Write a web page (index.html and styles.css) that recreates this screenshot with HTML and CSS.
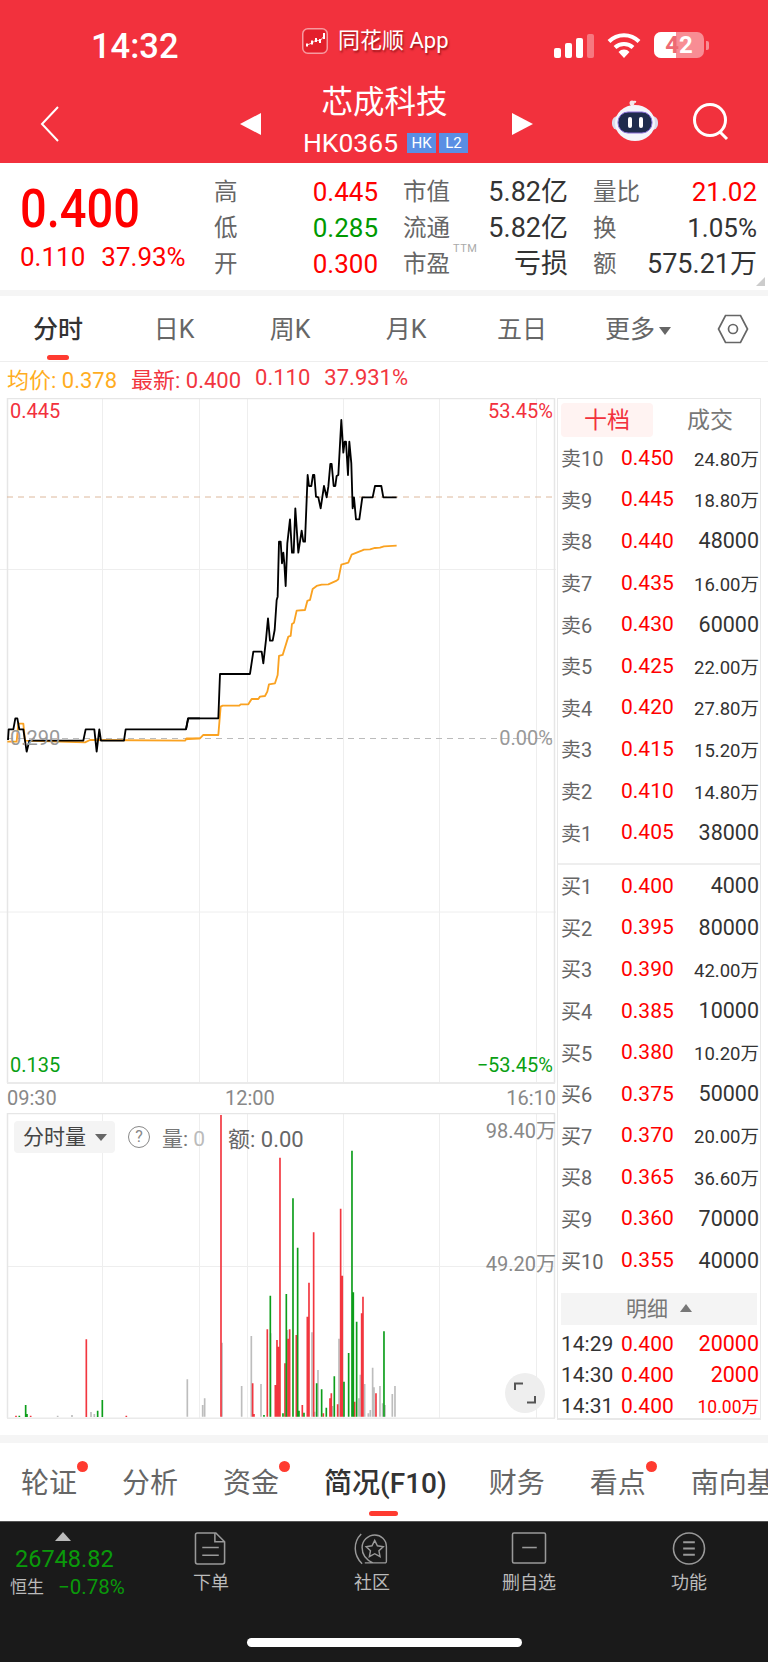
FILE: index.html
```html
<!DOCTYPE html>
<html lang="zh">
<head>
<meta charset="utf-8">
<title>芯成科技</title>
<link rel="stylesheet" href="styles.css">
</head>
<body>
<div class="page">
  <header class="header">
    <div class="status">
      <div class="time">14:32</div>
      <div class="app">
        <svg class="app-logo" viewBox="0 0 26 26"><rect x=".75" y=".75" width="24.5" height="24.5" rx="5" fill="#e3202c" stroke="#f79aa0" stroke-width="1.5"/><path d="M5 17l5-2 4-3 4 1 4-5" fill="none" stroke="#fff" stroke-width=".8"/><path d="M5 15.500v3M10 12.500v4M14 10v4M18 11v4M22 5v6" stroke="#fff" stroke-width="2"/></svg>
        <span class="app-name">同花顺 App</span>
      </div>
      <div class="sys">
        <div class="signal"><i class="b1"></i><i class="b2"></i><i class="b3"></i><i class="b4"></i></div>
        <svg class="wifi" viewBox="0 0 34 26"><path d="M2 9.500a21 21 0 0 1 30 0" fill="none" stroke="#fff" stroke-width="4"/><path d="M8 15.500a13 13 0 0 1 18 0" fill="none" stroke="#fff" stroke-width="4"/><path d="M17 26l-5.500-6a7.500 7.500 0 0 1 11 0z" fill="#fff"/></svg>
        <div class="battery"><div class="battery-fill"></div><span class="battery-num"><span class="bn-a">4</span><span class="bn-b">2</span></span></div>
        <div class="battery-nub"></div>
      </div>
    </div>
    <div class="nav">
      <svg class="back" viewBox="0 0 20 36"><path d="M18 1L2 18l16 17" fill="none" stroke="#fff" stroke-width="2"/></svg>
      <div class="tri tri-left"></div>
      <div class="title-block">
        <div class="title">芯成科技</div>
        <div class="code-row"><span class="code">HK0365</span><span class="badge">HK</span><span class="badge">L2</span></div>
      </div>
      <div class="tri tri-right"></div>
      <svg class="robot" viewBox="0 0 46 42"><path d="M20 7c-1-4 1-6 4-5" fill="none" stroke="#f3e6ea" stroke-width="2"/><circle cx="20" cy="3" r="2.500" fill="#f3e6ea"/><rect x="0" y="16" width="46" height="14" rx="6" fill="#d9dcec"/><ellipse cx="23" cy="23" rx="20" ry="18" fill="#f4f5fb"/><rect x="6" y="12" width="34" height="21" rx="10" fill="#1f2c4d" stroke="#8a6fd8" stroke-width="1"/><rect x="16" y="17" width="4" height="11" rx="2" fill="#fff"/><rect x="27" y="17" width="4" height="11" rx="2" fill="#fff"/></svg>
      <svg class="search" viewBox="0 0 38 38"><circle cx="18" cy="17" r="15.500" fill="none" stroke="#fff" stroke-width="3"/><path d="M28 29l7 7" stroke="#fff" stroke-width="3"/></svg>
    </div>
  </header>

  <section class="quote">
    <div class="price">
      <div class="price-main">0.400</div>
      <div class="price-sub"><span>0.110</span><span>37.93%</span></div>
    </div>
    <div class="stats">
      <div class="stat"><span class="k">高</span><span class="v up">0.445</span></div>
      <div class="stat"><span class="k">市值</span><span class="v cn">5.82亿</span></div>
      <div class="stat"><span class="k">量比</span><span class="v up">21.02</span></div>
      <div class="stat"><span class="k">低</span><span class="v down">0.285</span></div>
      <div class="stat"><span class="k">流通</span><span class="v cn">5.82亿</span></div>
      <div class="stat"><span class="k">换</span><span class="v">1.05%</span></div>
      <div class="stat"><span class="k">开</span><span class="v up">0.300</span></div>
      <div class="stat"><span class="k ttm-wrap">市盈<sup class="ttm">TTM</sup></span><span class="v cn">亏损</span></div>
      <div class="stat"><span class="k">额</span><span class="v cn">575.21万</span></div>
    </div>
    <div class="corner"></div>
  </section>

  <nav class="tabs">
    <div class="tab active">分时</div>
    <div class="tab">日K</div>
    <div class="tab">周K</div>
    <div class="tab">月K</div>
    <div class="tab">五日</div>
    <div class="tab">更多<i class="caret"></i></div>
    <svg class="hex" viewBox="0 0 32 30"><path d="M8.500 1.500h15L30.500 15l-7 13.500h-15L1.500 15z" fill="none" stroke="#666" stroke-width="1.700"/><circle cx="16" cy="15" r="4.500" fill="none" stroke="#666" stroke-width="1.700"/></svg>
  </nav>

  <div class="info">
    <span class="avg">均价: 0.378</span>
    <span class="last">最新: 0.400</span>
    <span class="last">0.110</span>
    <span class="last">37.931%</span>
  </div>

  <main class="main">
    <div class="charts">
      <div class="chart">
        <svg class="chart-svg" viewBox="0 398 556 686">
          <g class="grid">
            <path d="M102.500 398V1084M199.500 398V1084M247.500 398V1084M343.500 398V1084M439.500 398V1084M536.500 398V1084M0 569.500H556M0 912H556"/>
          </g>
          <path class="frame" d="M7.500 1083V398.500H554.500V1083"/>
          <path class="frame thick" d="M7 1083H555"/>
          <path class="dash tan" d="M7 497H555"/>
          <path class="dash" d="M7 738.500H555"/>
          <polyline class="ln orange" transform="translate(0 690) scale(.3333)" points="22,155 50,155 55,101 70,101 75,152 255,157 270,150 555,152 560,145 600,145"/>
          <polyline class="ln orange" transform="translate(180 400) scale(.3333)" points="15,1018 60,1015 70,1005 115,1005 122,920 128,917 178,917 182,913 205,913 215,897 235,897 240,890 255,888 262,875 267,853 285,850 293,825 297,768 308,765 325,710 332,708 336,672 342,668 350,632 375,630 382,603 390,600 398,567 410,558 425,554 445,553 470,542 475,538 484,494 505,488 515,464 530,458 545,452 552,449 570,448 585,444 600,443 612,439 650,437"/>
          <polyline class="ln black" transform="translate(0 690) scale(.3333)" points="24,150 26,118 40,118 46,85 52,85 58,118 70,118 80,185 88,152 250,152 257,118 283,118 290,185 298,118 303,152 372,152 377,118 558,118 565,85 600,85"/>
          <polyline class="ln black" transform="translate(180 400) scale(.3333)" points="18,988 24,955 115,955 120,822 210,822 220,755 245,755 250,790 258,720 264,655 270,722 278,722 284,690 290,600 293,590 297,425 302,425 306,490 310,458 313,490 317,558 322,430 330,358 336,458 341,458 346,325 355,458 365,392 370,425 375,425 383,225 387,258 394,258 399,225 403,225 408,290 415,292 422,325 432,258 440,292 445,260 451,192 455,192 461,258 466,258 470,228 475,225 484,60 490,158 494,125 498,125 504,225 508,125 514,190 518,325 522,292 528,358 538,358 547,292 578,292 585,258 604,258 610,292 650,292"/>
        </svg>
        <span class="lbl l-left l-top c-red">0.445</span>
        <span class="lbl l-right l-top c-red">53.45%</span>
        <span class="lbl l-left l-mid c-gray">0.290</span>
        <span class="lbl l-right l-mid c-gray">0.00%</span>
        <span class="lbl l-left l-bot c-green">0.135</span>
        <span class="lbl l-right l-bot c-green">−53.45%</span>
      </div>
      <div class="axis"><span>09:30</span><span class="axis-mid">12:00</span><span>16:10</span></div>
      <div class="volume">
        <svg class="volume-svg" viewBox="0 1113 556 306">
          <g class="grid">
            <path d="M102.500 1113V1418M199.500 1113V1418M247.500 1113V1418M343.500 1113V1418M439.500 1113V1418M536.500 1113V1418M7 1266.500H555"/>
          </g>
          <path class="frame" d="M7.500 1418V1113.500H554.500V1418"/>
          <path class="frame thick" d="M7 1418.500H555"/>
          <g transform="translate(0 1320) scale(.3333)" stroke-width="5">
            <path class="bar red" d="M259 291V58M48 291V287M92 291V287M379 291V287"/>
            <path class="bar green" d="M77 291V255M81 291V282M293 291V272M307 291V240M58 291V287"/>
            <path class="bar gray" d="M273 291V276M283 291V282M173 291V287M216 291V285"/>
          </g>
          <g transform="translate(160 1100) scale(.3333)" stroke-width="5">
            <path class="bar gray" d="M82 950V838M128 950V915M134 950V895M186 950V728M245 950V858M274 950V708M303 950V852M332 950V700M382 950V690M456 950V697M474 950V810M464 950V935M518 950V918M537 950V716M597 950V895M601 950V824M614 950V852M625 950V940M631 950V930M638 950V803M642 950V862M660 950V858M668 950V910M675 950V915M697 950V882M705 950V858"/>
            <path class="bar red" d="M183 950V45M278 950V850M282 950V942M322 950V688M346 950V855M351 950V720M356 950V740M360 950V173M375 950V790M384 950V716M389 950V688M409 950V705M427 950V915M442 950V650M447 950V548M461 950V397M490 950V940M510 950V895M514 950V880M533 950V913M542 950V326M547 950V527M584 950V905M605 950V640M609 950V590M648 950V880"/>
            <path class="bar green" d="M312 950V945M331 950V587M369 950V940M379 950V582M399 950V295M413 950V443M417 950V932M432 950V938M470 950V850M485 950V868M499 950V923M523 950V829M552 950V845M566 950V759M576 950V152M580 950V577M590 950V665M672 950V694"/>
          </g>
        </svg>
        <div class="vol-bar">
          <div class="chip">分时量<i class="chip-caret"></i></div>
          <span class="help">?</span>
          <span class="vol-k">量: <span class="vol-zero">0</span></span>
          <span class="vol-amt">额: 0.00</span>
        </div>
        <span class="vlbl vl-top">98.40万</span>
        <span class="vlbl vl-mid">49.20万</span>
        <button class="expand" type="button" aria-label="expand"><svg viewBox="0 0 22 22"><path d="M1 8V1.500h8M21 14v6.500h-8" fill="none" stroke="#555" stroke-width="2"/></svg></button>
      </div>
    </div>

    <aside class="book">
      <div class="book-tabs"><div class="book-tab on">十档</div><div class="book-tab">成交</div></div>
      <div class="rows">
        <div class="row"><span class="r-k">卖10</span><span class="r-p">0.450</span><span class="r-q wan">24.80万</span></div>
        <div class="row"><span class="r-k">卖9</span><span class="r-p">0.445</span><span class="r-q wan">18.80万</span></div>
        <div class="row"><span class="r-k">卖8</span><span class="r-p">0.440</span><span class="r-q">48000</span></div>
        <div class="row"><span class="r-k">卖7</span><span class="r-p">0.435</span><span class="r-q wan">16.00万</span></div>
        <div class="row"><span class="r-k">卖6</span><span class="r-p">0.430</span><span class="r-q">60000</span></div>
        <div class="row"><span class="r-k">卖5</span><span class="r-p">0.425</span><span class="r-q wan">22.00万</span></div>
        <div class="row"><span class="r-k">卖4</span><span class="r-p">0.420</span><span class="r-q wan">27.80万</span></div>
        <div class="row"><span class="r-k">卖3</span><span class="r-p">0.415</span><span class="r-q wan">15.20万</span></div>
        <div class="row"><span class="r-k">卖2</span><span class="r-p">0.410</span><span class="r-q wan">14.80万</span></div>
        <div class="row"><span class="r-k">卖1</span><span class="r-p">0.405</span><span class="r-q">38000</span></div>
      </div>
      <div class="book-div"></div>
      <div class="rows">
        <div class="row"><span class="r-k">买1</span><span class="r-p">0.400</span><span class="r-q">4000</span></div>
        <div class="row"><span class="r-k">买2</span><span class="r-p">0.395</span><span class="r-q">80000</span></div>
        <div class="row"><span class="r-k">买3</span><span class="r-p">0.390</span><span class="r-q wan">42.00万</span></div>
        <div class="row"><span class="r-k">买4</span><span class="r-p">0.385</span><span class="r-q">10000</span></div>
        <div class="row"><span class="r-k">买5</span><span class="r-p">0.380</span><span class="r-q wan">10.20万</span></div>
        <div class="row"><span class="r-k">买6</span><span class="r-p">0.375</span><span class="r-q">50000</span></div>
        <div class="row"><span class="r-k">买7</span><span class="r-p">0.370</span><span class="r-q wan">20.00万</span></div>
        <div class="row"><span class="r-k">买8</span><span class="r-p">0.365</span><span class="r-q wan">36.60万</span></div>
        <div class="row"><span class="r-k">买9</span><span class="r-p">0.360</span><span class="r-q">70000</span></div>
        <div class="row"><span class="r-k">买10</span><span class="r-p">0.355</span><span class="r-q">40000</span></div>
      </div>
      <div class="detail-head">明细<i class="detail-caret"></i></div>
      <div class="detail">
        <div class="drow"><span class="d-t">14:29</span><span class="r-p">0.400</span><span class="r-q d-q">20000</span></div>
        <div class="drow"><span class="d-t">14:30</span><span class="r-p">0.400</span><span class="r-q d-q">2000</span></div>
        <div class="drow"><span class="d-t">14:31</span><span class="r-p">0.400</span><span class="r-q d-q wan">10.00万</span></div>
      </div>
    </aside>
  </main>

  <div class="sep"></div>

  <nav class="ftabs">
    <div class="ftab dot">轮证</div>
    <div class="ftab">分析</div>
    <div class="ftab dot">资金</div>
    <div class="ftab active">简况(F10)</div>
    <div class="ftab">财务</div>
    <div class="ftab dot">看点</div>
    <div class="ftab">南向基金</div>
  </nav>

  <footer class="dock">
    <div class="dock-row">
      <div class="index">
        <i class="index-tri"></i>
        <div class="index-num">26748.82</div>
        <div class="index-sub"><span class="index-name">恒生</span><span class="index-pct">−0.78%</span></div>
      </div>
      <div class="dock-item">
        <svg class="dock-icon" viewBox="0 0 34 34"><path d="M3 1h19l9 9v21a2 2 0 0 1-2 2H3a2 2 0 0 1-2-2V3a2 2 0 0 1 2-2z" fill="none" stroke="#999" stroke-width="1.600"/><path d="M21 1v9h10M8 16h17M8 24h17" fill="none" stroke="#999" stroke-width="1.600"/></svg>
        <span>下单</span>
      </div>
      <div class="dock-item">
        <svg class="dock-icon" viewBox="0 0 40 34"><path d="M8 1C-1 10-1 24 9 34" fill="none" stroke="#999" stroke-width="1.600"/><path d="M12 33h23a2 2 0 0 0 1-2V15C36 7 30 2 23 2S9 8 9 16c0 8 5 14 12 17" fill="none" stroke="#999" stroke-width="1.600" stroke-linejoin="round"/><path d="M23 8l3 6 6.500 1-4.800 4.500 1.200 6.500-5.900-3.200-5.900 3.200 1.200-6.500L13.500 15l6.500-1z" fill="none" stroke="#999" stroke-width="1.600"/></svg>
        <span>社区</span>
      </div>
      <div class="dock-item">
        <svg class="dock-icon" viewBox="0 0 36 34"><rect x="1" y="1" width="34" height="31" rx="1.500" fill="none" stroke="#999" stroke-width="1.600"/><path d="M11 16h15" stroke="#999" stroke-width="1.600"/></svg>
        <span>删自选</span>
      </div>
      <div class="dock-item">
        <svg class="dock-icon" viewBox="0 0 36 34"><circle cx="18" cy="17" r="16" fill="none" stroke="#999" stroke-width="1.600"/><path d="M12 10.500h12M12 17h12M12 23.500h12" stroke="#999" stroke-width="2"/></svg>
        <span>功能</span>
      </div>
    </div>
    <div class="home"></div>
  </footer>
</div>
</body>
</html>
```
FILE: styles.css
```css
* { box-sizing: border-box; }
html, body { margin: 0; padding: 0; background: #fff; }
body {
  font-family: Roboto, "Noto Sans CJK SC", sans-serif;
  color: #333;
}
.page { width: 768px; height: 1662px; overflow: hidden; display: flex; flex-direction: column; position: relative; }

/* header */
.header { height: 163px; background: #f2313d; color: #fff; flex: none; }
.status { height: 80px; display: flex; align-items: flex-start; padding-left: 91px; }
.time { width: 211px; font-size: 34.500px; font-weight: 500; line-height: 38px; margin-top: 27px; }
.app { width: 252px; display: flex; align-items: center; margin-top: 27px; }
.app-logo { width: 26px; height: 26px; }
.app-name { margin-left: 10px; font-size: 22px; line-height: 28px; text-shadow: 1px 2px 2px rgba(90, 0, 0, .55); }
.sys { display: flex; align-items: center; margin-top: 32px; height: 26px; }
.signal { display: flex; align-items: flex-end; gap: 4px; height: 24px; margin-top: 2px; }
.signal i { display: block; width: 7px; background: #fff; border-radius: 2px; }
.signal .b1 { height: 10px; }
.signal .b2 { height: 15px; }
.signal .b3 { height: 20px; }
.signal .b4 { height: 24px; opacity: .35; }
.wifi { width: 34px; height: 26px; margin-left: 13px; }
.battery { position: relative; width: 50px; height: 26px; margin-left: 13px; border-radius: 7px; background: rgba(255, 255, 255, .45); overflow: hidden; text-align: center; }
.battery-fill { position: absolute; left: 0; top: 0; bottom: 0; width: 22px; background: #fff; }
.battery-num { position: relative; font-size: 24px; line-height: 26px; font-weight: 700; }
.bn-a { color: #ee6a73; }
.bn-b { color: #fff; }
.battery-nub { width: 3px; height: 9px; margin-left: 2px; background: rgba(255, 255, 255, .45); border-radius: 0 2px 2px 0; }

.nav { height: 83px; display: flex; align-items: center; padding-left: 40px; }
.back { width: 20px; height: 36px; margin-top: 5px; }
.tri { width: 0; height: 0; border-top: 11px solid transparent; border-bottom: 11px solid transparent; margin-top: 4px; }
.tri-left { border-right: 21px solid #fff; margin-left: 180px; }
.tri-right { border-left: 21px solid #fff; }
.title-block { width: 251px; display: flex; flex-direction: column; align-items: center; margin-top: -3px; }
.title { font-size: 31.500px; line-height: 40px; margin-left: -4px; }
.code-row { display: flex; align-items: center; margin-top: 6px; margin-left: -2px; }
.code { font-size: 26.500px; line-height: 28px; color: #fff; }
.badge { background: #5a8ee4; color: #fff; font-size: 15px; line-height: 20px; height: 20px; width: 29px; text-align: center; margin-left: 3px; }
.code + .badge { margin-left: 9px; }
.robot { width: 46px; height: 42px; margin-left: 79px; margin-top: -1px; }
.search { width: 38px; height: 38px; margin-left: 34px; margin-top: 1px; }

/* quote */
.quote { height: 127px; flex: none; display: flex; position: relative; border-bottom: 0; }
.price { width: 214px; padding-left: 20px; color: #f00; }
.price-main { font-size: 48px; font-weight: 500; line-height: 50px; margin-top: 21px; transform: scale(.98, 1.12); transform-origin: left center; }
.price-sub { display: flex; gap: 16px; font-size: 26px; line-height: 28px; margin-top: 9px; color: #f00; }
.stats { display: grid; grid-template-columns: 164px 165px 164px; column-gap: 25px; grid-auto-rows: 36px; padding-top: 11px; }
.stat { display: flex; justify-content: space-between; align-items: center; }
.k { font-size: 23.500px; color: #666; line-height: 36px; }
.v { font-size: 26px; color: #333; line-height: 36px; }
.v.cn { font-size: 27px; }
.up { color: #f00; }
.down { color: #090; }
.ttm-wrap { position: relative; }
.ttm { position: absolute; left: 50px; top: -3px; font-size: 11px; line-height: 12px; color: #aaa; letter-spacing: .5px; }
.corner { position: absolute; right: 3px; bottom: 4px; width: 0; height: 0; border-left: 9px solid transparent; border-bottom: 9px solid #ccc; }

/* tabs */
.tabs { height: 72px; flex: none; border-top: 6px solid #f5f5f5; border-bottom: 1px solid #eee; display: grid; grid-template-columns: repeat(6, 116px) 72px; align-items: center; }
.tab { position: relative; height: 65px; text-align: center; font-size: 25px; line-height: 68px; color: #666; }
.tab.active { color: #333; font-weight: 500; }
.tab.active::after { content: ""; position: absolute; left: 47px; bottom: 1px; width: 22px; height: 5px; background: #ff3b30; border-radius: 3px; }
.caret { display: inline-block; width: 0; height: 0; margin-left: 4px; vertical-align: 3px; border-left: 6px solid transparent; border-right: 6px solid transparent; border-top: 8px solid #666; }
.hex { width: 32px; height: 30px; margin-left: 21px; }

/* info */
.info { height: 35px; flex: none; display: flex; align-items: center; padding: 0 0 4px 7px; font-size: 22px; }
.avg { color: #ffad1f; margin-right: 14px; }
.last { color: #f2363f; margin-right: 14px; }

/* main */
.main { height: 1022px; flex: none; display: flex; align-items: flex-start; }
.charts { width: 557px; flex: none; padding-top: 1px; }
.chart { position: relative; height: 686px; }
.chart-svg, .volume-svg { display: block; width: 556px; }
.chart-svg { height: 686px; }
.volume-svg { height: 306px; }
.grid path { stroke: #eee; stroke-width: 1; fill: none; }
.frame { stroke: #e6e6e6; stroke-width: 1.500; fill: none; }
.frame.thick { stroke-width: 2; stroke: #eaeaea; }
.dash { stroke: #bbb; stroke-width: 1; stroke-dasharray: 6 5; fill: none; }
.dash.tan { stroke: #ddb89c; }
.ln { fill: none; stroke-width: 5.500; stroke-linejoin: round; }
.ln.black { stroke: #000; }
.ln.orange { stroke: #faa221; }
.lbl { position: absolute; font-size: 20px; line-height: 24px; }
.l-left { left: 10px; }
.l-right { right: 4px; }
.l-top { top: 1px; }
.l-mid { top: 328px; }
.l-bot { top: 655px; }
.c-red { color: #f2313d; }
.c-gray { color: #999; }
.c-green { color: #0a9f14; }
.axis { height: 29px; display: flex; justify-content: space-between; padding: 0 1px 0 7px; font-size: 20px; line-height: 29px; color: #888; position: relative; }
.axis-mid { position: absolute; left: 225px; }
.volume { position: relative; height: 306px; }
.bar { fill: none; }
.bar.red { stroke: #f2363f; }
.bar.green { stroke: #0d9e1b; }
.bar.gray { stroke: #bdbdbd; }
.vol-bar { position: absolute; left: 14px; top: 8px; display: flex; align-items: center; height: 32px; font-size: 22px; color: #777; }
.chip { width: 101px; height: 32px; background: #f4f4f4; border-radius: 4px; font-size: 21px; line-height: 32px; color: #444; padding-left: 9px; display: flex; align-items: center; }
.chip-caret { margin-left: 9px; width: 0; height: 0; border-left: 6px solid transparent; border-right: 6px solid transparent; border-top: 7px solid #666; }
.help { width: 22px; height: 22px; border: 1.500px solid #888; border-radius: 50%; margin-left: 13px; text-align: center; font-size: 16px; line-height: 19px; color: #888; }
.vol-k { margin-left: 12px; width: 66px; font-size: 21px; }
.vol-zero { color: #bbb; }
.vol-amt { color: #666; }
.vlbl { position: absolute; right: 1px; font-size: 20px; line-height: 24px; color: #888; }
.vl-top { top: 6px; }
.vl-mid { top: 139px; }
.expand { position: absolute; left: 505px; top: 260px; width: 40px; height: 40px; border: 0; padding: 9px; border-radius: 50%; background: #eee; }
.expand svg { display: block; width: 22px; height: 22px; }

/* order book */
.book { width: 204px; flex: none; height: 1022px; margin-top: 1px; border: 1px solid #e8e8e8; border-bottom-width: 2px; padding-top: 4px; margin-bottom: -1px; }
.book-tabs { display: flex; height: 34px; padding-left: 3px; }
.book-tab { width: 92px; text-align: center; font-size: 23px; line-height: 35px; color: #777; }
.book-tab.on { color: #f2313d; background: #fff3f2; border-radius: 4px; }
.book-tab + .book-tab { width: 94px; margin-left: 10px; }
.rows { display: flex; flex-direction: column; }
.row { height: 41.600px; display: flex; align-items: center; padding: 0 1px 0 3px; }
.r-k { width: 60px; font-size: 20px; color: #666; }
.r-p { width: 60px; font-size: 21px; color: #f00; }
.r-q { flex: 1; text-align: right; font-size: 21.500px; color: #333; white-space: nowrap; }
.r-q.wan { font-size: 18.500px; }
.book-div { height: 2px; margin: 10px 0 0; background: #eee; }
.book-div + .rows { margin-top: 0; }
.detail-head { height: 32px; margin: 12px 3px 0; background: #f4f4f4; text-align: center; font-size: 21px; line-height: 32px; color: #777; }
.detail-caret { display: inline-block; width: 0; height: 0; margin-left: 12px; vertical-align: 4px; border-left: 6px solid transparent; border-right: 6px solid transparent; border-bottom: 8px solid #777; }
.detail { display: flex; flex-direction: column; gap: 3px; padding-top: 5px; }
.drow { height: 28px; display: flex; align-items: center; padding: 0 1px 0 3px; }
.d-t { width: 60px; font-size: 21px; color: #333; }
.d-q { color: #f00; }
.d-q.wan { font-size: 17.500px; }

.sep { height: 24px; flex: none; border-bottom: 8px solid #f5f5f5; }

/* bottom tabs */
.ftabs { height: 78px; flex: none; display: flex; gap: 45px; padding-left: 21px; overflow: hidden; }
.ftab { position: relative; font-size: 28px; line-height: 82px; color: #666; white-space: nowrap; flex: none; }
.ftab.active { color: #333; font-weight: 500; margin-right: -3px; }
.ftab.active::after { content: ""; position: absolute; left: 45px; bottom: 5px; width: 29px; height: 5px; background: #ff3b30; border-radius: 3px; }
.ftab.dot::after { content: ""; position: absolute; right: -11px; top: 18px; width: 11px; height: 11px; background: #ff3b30; border-radius: 50%; }

/* dock */
.dock { flex: 1; background: #1a1a1a; border-top: 1px solid #555; position: relative; }
.dock-row { display: grid; grid-template-columns: 171px 161px 157px 160px 96px; }
.index { position: relative; height: 80px; }
.index-tri { position: absolute; left: 55px; top: 10px; width: 0; height: 0; border-left: 8px solid transparent; border-right: 8px solid transparent; border-bottom: 9px solid #bbb; }
.index-num { position: absolute; left: 15px; top: 23px; font-size: 23.500px; line-height: 28px; color: #0a9a0a; }
.index-sub { position: absolute; left: 10px; top: 53px; display: flex; align-items: center; gap: 14px; white-space: nowrap; }
.index-name { font-size: 17px; line-height: 24px; color: #bbb; }
.index-pct { font-size: 20.500px; line-height: 24px; color: #0a9a0a; }
.dock-item { width: 80px; display: flex; flex-direction: column; align-items: center; padding-top: 10px; font-size: 18px; color: #bbb; }
.dock-icon { width: 36px; height: 33px; }
.dock-item span { line-height: 24px; margin-top: 6px; }
.home { position: absolute; left: 247px; top: 116px; width: 275px; height: 9px; background: #fff; border-radius: 5px; }
```
